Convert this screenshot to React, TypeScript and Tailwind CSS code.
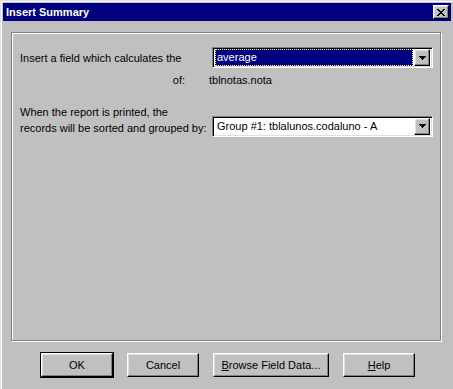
import React from 'react';

const raised =
  'border border-t-white border-l-white border-b-black border-r-black shadow-[inset_-1px_-1px_0_#808080,inset_1px_1px_0_#dfdfdf]';
const sunken =
  'border border-t-[#808080] border-l-[#808080] border-b-white border-r-white shadow-[inset_1px_1px_0_#000,inset_-1px_-1px_0_#dfdfdf]';

const ArrowButton = () => (
  <div className={`w-[16px] h-[17px] bg-[#c0c0c0] flex items-center justify-center ${raised}`}>
    <svg width="7" height="4" viewBox="0 0 7 4">
      <path d="M0 0h7v1H0zM1 1h5v1H1zM2 2h3v1H2zM3 3h1v1H3z" fill="#000" />
    </svg>
  </div>
);

const Combo = ({ value, selected }: { value: string; selected?: boolean }) => (
  <div className={`w-[221px] h-[21px] bg-white flex items-center p-[2px] ${sunken}`}>
    <div className="flex-1 h-[17px] flex items-center pr-[1px]">
      {selected ? (
        <div className="w-full h-full bg-[#000080] text-white border border-dotted border-[#ffff80] flex items-center pl-[1px] leading-none">
          {value}
        </div>
      ) : (
        <div className="pl-[2px] text-black leading-none">{value}</div>
      )}
    </div>
    <ArrowButton />
  </div>
);

const Button = ({ children, isDefault }: { children: React.ReactNode; isDefault?: boolean }) => (
  <button
    className={`w-full h-[24px] bg-[#c0c0c0] text-black flex items-center justify-center ${
      isDefault ? 'outline outline-1 outline-black' : ''
    } ${raised}`}
  >
    {children}
  </button>
);

export default function App() {
  return (
    <div
      className="w-[453px] h-[389px] bg-[#c0c0c0] border-t border-l border-t-[#dfdfdf] border-l-[#dfdfdf] shadow-[inset_1px_1px_0_#fff] p-[2px] flex flex-col text-[11px] text-black"
      style={{ fontFamily: '"Liberation Sans", Arial, sans-serif' }}
    >
      <div className="h-[18px] bg-[#000080] flex items-center justify-between pl-[3px] pr-[2px]">
        <span className="text-white font-bold text-[11px]">Insert Summary</span>
        <div className={`w-[16px] h-[14px] bg-[#c0c0c0] flex items-center justify-center ${raised}`}>
          <svg width="8" height="7" viewBox="0 0 8 7">
            <path
              d="M0 0h2v1H0zM6 0h2v1H6zM1 1h2v1H1zM5 1h2v1H5zM2 2h4v1H2zM3 3h2v1H3zM2 4h4v1H2zM1 5h2v1H1zM5 5h2v1H5zM0 6h2v1H0zM6 6h2v1H6z"
              fill="#000"
            />
          </svg>
        </div>
      </div>

      <div className="ml-[8px] mt-[11px] w-[430px] h-[309px] border border-[#808080] shadow-[inset_1px_1px_0_#fff,1px_1px_0_#fff] pt-[14px] flex flex-col">
        <div className="flex items-start">
          <div className="w-[200px] pl-[8px] pt-[3px]">Insert a field which calculates the</div>
          <Combo value="average" selected />
        </div>
        <div className="flex mt-[4px]">
          <div className="w-[173px] text-right">of:</div>
          <div className="pl-[24px]">tblnotas.nota</div>
        </div>
        <div className="flex items-start mt-[15px]">
          <div className="w-[200px] pl-[8px] leading-[16px]">
            When the report is printed, the
            <br />
            records will be sorted and grouped by:
          </div>
          <div className="mt-[12px]">
            <Combo value="Group #1: tblalunos.codaluno - A" />
          </div>
        </div>
      </div>

      <div className="flex mt-[12px] pl-[38px] gap-[14px]">
        <div className="w-[72px]">
          <Button isDefault>OK</Button>
        </div>
        <div className="w-[72px]">
          <Button>Cancel</Button>
        </div>
        <div className="w-[116px]">
          <Button>
            <span className="underline">B</span>rowse Field Data...
          </Button>
        </div>
        <div className="w-[72px]">
          <Button>
            <span className="underline">H</span>elp
          </Button>
        </div>
      </div>
    </div>
  );
}
